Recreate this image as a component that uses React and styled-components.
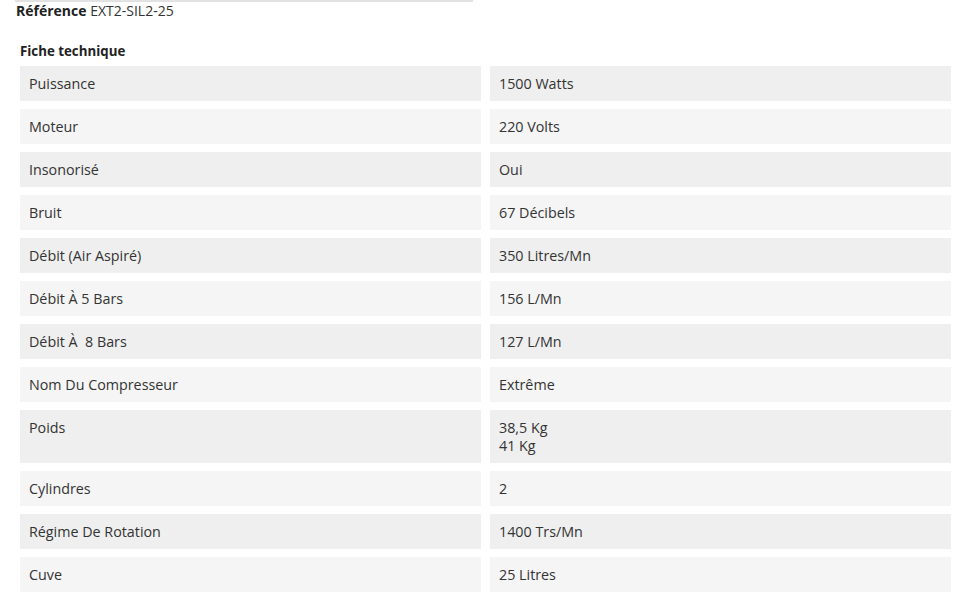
import styled, { createGlobalStyle } from "styled-components";

const GlobalStyle = createGlobalStyle`
    body {
        margin: 0;
        background: #fff;
        font-family: "Open Sans", "Liberation Sans", sans-serif;
        color: #333;
    }
`;

const Page = styled.div`
    width: 963px;
`;

const TopRule = styled.div`
    margin-left: 15px;
    width: 458px;
    height: 2px;
    background: #e2e2e2;
`;

const Reference = styled.div`
    margin: 0 0 0 16px;
    font-size: 14px;
    line-height: 18px;
    color: #333;

    & b {
        color: #222;
        font-weight: 700;
    }
`;

const SpecSection = styled.section`
    padding: 0 12px 0 20px;
    margin-top: 22px;
`;

const Title = styled.h3`
    margin: 0 0 6px;
    font-size: 13.3px;
    line-height: 18px;
    font-weight: 700;
    color: #222;
`;

const SpecGrid = styled.div`
    display: grid;
    grid-template-columns: 461px 461px;
    column-gap: 9px;
    row-gap: 8px;
`;

const Cell = styled.div`
    background: ${(props) => (props.$odd ? "#efefef" : "#f5f5f5")};
    padding: 9px 9px 8px;
    font-size: 14.3px;
    line-height: 18px;
    color: #333;
`;

const specs = [
    ["Puissance", ["1500 Watts"]],
    ["Moteur", ["220 Volts"]],
    ["Insonorisé", ["Oui"]],
    ["Bruit", ["67 Décibels"]],
    ["Débit (Air Aspiré)", ["350 Litres/Mn"]],
    ["Débit À 5 Bars", ["156 L/Mn"]],
    ["Débit À\u00a0 8 Bars", ["127 L/Mn"]],
    ["Nom Du Compresseur", ["Extrême"]],
    ["Poids", ["38,5 Kg", "41 Kg"]],
    ["Cylindres", ["2"]],
    ["Régime De Rotation", ["1400 Trs/Mn"]],
    ["Cuve", ["25 Litres"]],
];

function App() {
    return (
        <Page>
            <GlobalStyle />
            <TopRule />
            <Reference>
                <b>Référence</b> EXT2-SIL2-25
            </Reference>
            <SpecSection>
                <Title>Fiche technique</Title>
                <SpecGrid>
                    {specs.map(([label, values], i) => [
                        <Cell key={label + "-l"} $odd={i % 2 === 0}>
                            {label}
                        </Cell>,
                        <Cell key={label + "-v"} $odd={i % 2 === 0}>
                            {values.map((v) => (
                                <div key={v}>{v}</div>
                            ))}
                        </Cell>,
                    ])}
                </SpecGrid>
            </SpecSection>
        </Page>
    );
}

export default App;
